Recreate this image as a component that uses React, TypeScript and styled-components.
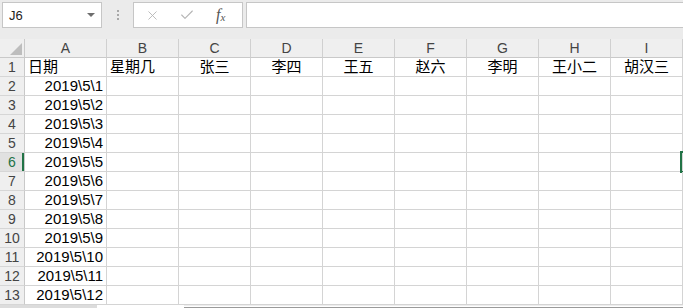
import React from 'react';
import styled, { createGlobalStyle, css } from 'styled-components';
import { X, Check } from 'lucide-react';

const GlobalStyle = createGlobalStyle`
  html, body {
    margin: 0;
    padding: 0;
    background: #ffffff;
    overflow: hidden;
  }
  body {
    font-family: "Liberation Sans", "Noto Sans CJK SC", sans-serif;
    color: #000;
  }
`;

const Page = styled.div`
  width: 683px;
  height: 308px;
  overflow: hidden;
  display: flex;
  flex-direction: column;
`;

/* formula bar */
const Toolbar = styled.div`
  height: 39px;
  flex: none;
  background: #ebebeb;
  display: flex;
  align-items: flex-start;
  padding: 2px 0 0 2px;
  box-sizing: border-box;
`;

const NameBox = styled.div`
  width: 100px;
  height: 26px;
  box-sizing: border-box;
  background: #fff;
  border: 1px solid #c6c6c6;
  display: flex;
  align-items: center;
  justify-content: space-between;
  padding: 0 6px 0 6px;
  font-size: 13px;
  color: #222;
`;

const DropArrow = styled.span`
  width: 0;
  height: 0;
  border-left: 4px solid transparent;
  border-right: 4px solid transparent;
  border-top: 4px solid #6e6e6e;
`;

const Grip = styled.div`
  width: 31px;
  height: 26px;
  display: flex;
  flex-direction: column;
  align-items: center;
  justify-content: center;
  gap: 2px;
`;

const Dot = styled.span`
  width: 2px;
  height: 2px;
  background: #a8a8a8;
`;

const ButtonBox = styled.div`
  width: 110px;
  height: 26px;
  box-sizing: border-box;
  background: #fff;
  border: 1px solid #c6c6c6;
  display: flex;
  align-items: center;
  padding-left: 11px;
  gap: 19px;
  color: #b4b4b4;
`;

const Fx = styled.span`
  font-family: "Liberation Serif", serif;
  font-style: italic;
  font-size: 16px;
  color: #555;
  margin-left: 2px;
  sub {
    font-size: 11px;
    vertical-align: -1px;
  }
`;

const FormulaInput = styled.div`
  flex: 1;
  height: 26px;
  margin-left: 3px;
  margin-right: -3px;
  box-sizing: border-box;
  background: #fff;
  border: 1px solid #c6c6c6;
`;

/* sheet */
const Sheet = styled.div`
  display: grid;
  grid-template-columns: 25px 82px repeat(9, 72px);
  grid-auto-rows: 19px;
  flex: none;
`;

const cellBase = css`
  box-sizing: border-box;
  line-height: 18px;
  white-space: nowrap;
  overflow: hidden;
`;

const Corner = styled.div`
  ${cellBase};
  background: #efefef;
  border-right: 1px solid #c9c9c9;
  border-bottom: 1px solid #c9c9c9;
  display: flex;
  align-items: flex-end;
  justify-content: flex-end;
  padding: 0 2px 2px 0;
`;

const Triangle = styled.span`
  width: 0;
  height: 0;
  border-left: 12px solid transparent;
  border-bottom: 12px solid #bdbdbd;
`;

const ColHead = styled.div`
  ${cellBase};
  background: #efefef;
  border-right: 1px solid #d0d0d0;
  border-bottom: 1px solid #c9c9c9;
  text-align: center;
  font-size: 14px;
  color: #444;
`;

const RowHead = styled.div<{ $active?: boolean }>`
  ${cellBase};
  background: ${(p) => (p.$active ? '#e1e1e1' : '#efefef')};
  border-right: 1px solid #c9c9c9;
  border-bottom: 1px solid #d6d6d6;
  text-align: center;
  font-size: 14px;
  color: ${(p) => (p.$active ? '#217346' : '#444')};
  ${(p) => p.$active && css`box-shadow: inset -2px 0 0 #217346;`}
`;

const Cell = styled.div<{ $align?: 'left' | 'right' | 'center'; $selected?: boolean }>`
  ${cellBase};
  border-right: 1px solid #d4d4d4;
  border-bottom: 1px solid #d4d4d4;
  font-size: 15px;
  padding: 0 3px;
  text-align: ${(p) => p.$align || 'left'};
  position: relative;
  overflow: visible;
  ${(p) =>
    p.$selected &&
    css`
      &::after {
        content: '';
        position: absolute;
        inset: -2px -2px -2px -3px;
        border: 2px solid #217346;
        box-sizing: border-box;
      }
    `}
`;

const BottomBar = styled.div`
  display: flex;
  height: 4px;
  flex: none;
`;

const TabStrip = styled.div`
  width: 97px;
  background: #dcdcdc;
`;

const ScrollTrack = styled.div`
  flex: 1;
  margin-left: 87px;
  border-top: 1px solid #ededed;
  border-bottom: 2px solid #9a9a9a;
`;

// J sits just past the right edge, so its letter is not drawn
const letters = ['A', 'B', 'C', 'D', 'E', 'F', 'G', 'H', 'I', ''];
const cols = ['B', 'C', 'D', 'E', 'F', 'G', 'H', 'I', 'J'];
const names = ['张三', '李四', '王五', '赵六', '李明', '王小二', '胡汉三'];
const dates = Array.from({ length: 12 }, (_, i) => `2019\\5\\${i + 1}`);

export default function App() {
  return (
    <Page>
      <GlobalStyle />
      <Toolbar>
        <NameBox>
          <span>J6</span>
          <DropArrow />
        </NameBox>
        <Grip>
          <Dot />
          <Dot />
          <Dot />
        </Grip>
        <ButtonBox>
          <X size={15} strokeWidth={1.4} />
          <Check size={16} strokeWidth={1.6} />
          <Fx>
            f<sub>x</sub>
          </Fx>
        </ButtonBox>
        <FormulaInput />
      </Toolbar>

      <Sheet>
        <Corner>
          <Triangle />
        </Corner>
        {letters.map((l, i) => (
          <ColHead key={i}>{l}</ColHead>
        ))}

        {/* header row */}
        <RowHead>1</RowHead>
        <Cell>日期</Cell>
        <Cell>星期几</Cell>
        {names.map((n) => (
          <Cell key={n} $align="center">
            {n}
          </Cell>
        ))}
        <Cell />

        {dates.map((d, i) => {
          const row = i + 2;
          return (
            <React.Fragment key={d}>
              <RowHead $active={row === 6}>{row}</RowHead>
              <Cell $align="right">{d}</Cell>
              {cols.map((c) => (
                <Cell key={c} $selected={c === 'J' && row === 6} />
              ))}
            </React.Fragment>
          );
        })}
      </Sheet>

      <BottomBar>
        <TabStrip />
        <ScrollTrack />
      </BottomBar>
    </Page>
  );
}
